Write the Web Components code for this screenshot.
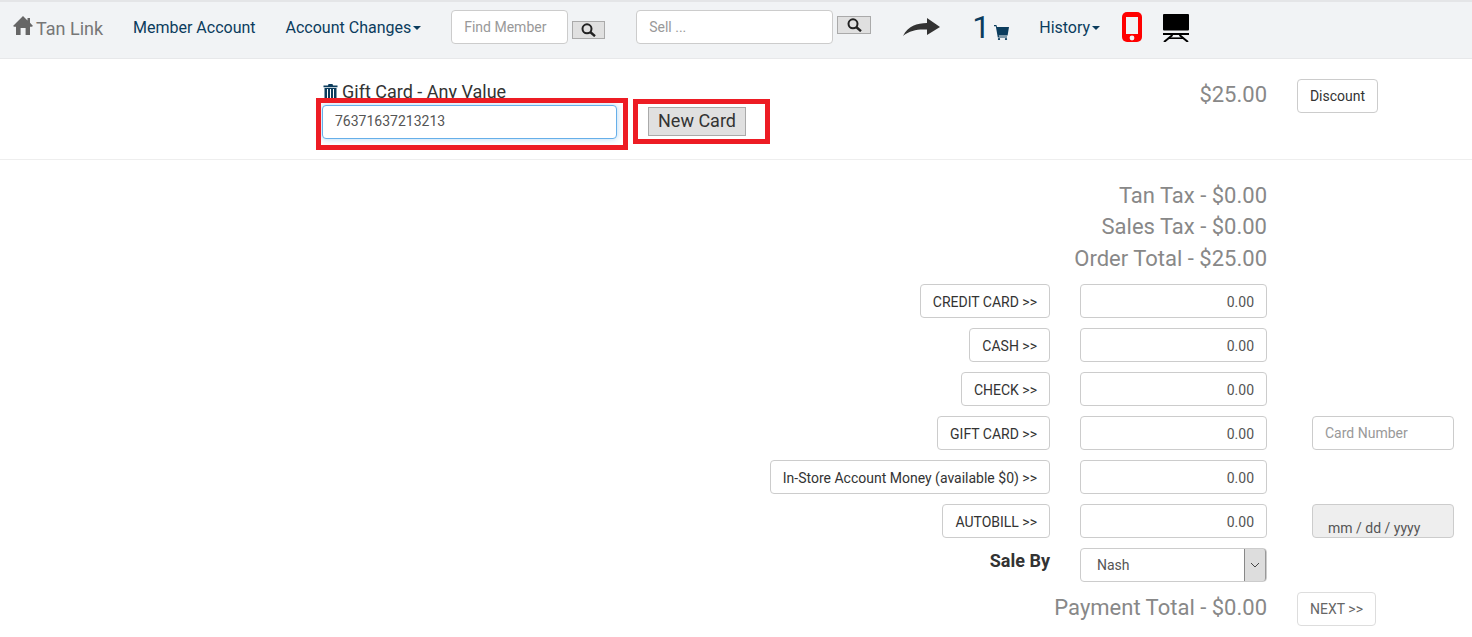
<!DOCTYPE html>
<html>
<head>
<meta charset="utf-8">
<title>Tan Link</title>
<style>
  html, body { margin: 0; padding: 0; background: #fff; overflow: hidden; }
  body { font-family: Roboto, "Liberation Sans", sans-serif; }
</style>
</head>
<body>
<tan-app></tan-app>

<script>
// small icon set, all drawn by hand
const icons = {
  home: '<svg width="20" height="19" viewBox="0 0 20 19"><path fill="#666" d="M10 0 L14.5 4.4 V2 H17 V6.8 L20 10 L18.8 10.8 H17 V19 H12.6 V12 H7.6 V19 H3 V10.8 H1.2 L0 10 Z"/></svg>',
  search: '<svg width="15" height="14" viewBox="0 0 15 14"><circle cx="6" cy="5.8" r="4.5" fill="none" stroke="#222" stroke-width="2"/><path d="M9.2 9 L14 13.2" stroke="#222" stroke-width="2.4"/></svg>',
  arrow: '<svg width="37" height="18" viewBox="0 0 37 18"><path fill="#333" d="M37 9 L24 0 V5 C14 5 5 8 0 18 C7 12 15 11 24 11.5 V17 Z"/></svg>',
  cart: '<svg width="15" height="15" viewBox="0 0 15 15"><path fill="#0b3c5d" d="M0 0 H2.4 L3 2 H15 L13.6 10.4 H4.8 L5 11.6 H13 V12.6 H3.8 L1.8 1.2 H0 Z"/><circle cx="5" cy="14" r="1.1" fill="#0b3c5d"/><circle cx="12" cy="14" r="1.1" fill="#0b3c5d"/></svg>',
  phone: '<svg width="20" height="30" viewBox="0 0 20 30"><rect width="20" height="30" rx="5" fill="#f00"/><rect x="4" y="5" width="12" height="17" fill="#f1f3f5"/><circle cx="10" cy="26" r="2.4" fill="#f1f3f5"/></svg>',
  kiosk: '<svg width="26" height="28" viewBox="0 0 26 28"><rect x="0" y="0" width="26" height="16.5" rx="1" fill="#000"/><rect x="0" y="19" width="26" height="2" fill="#000"/><path d="M9.5 21 L1 28 M16.5 21 L25 28" stroke="#000" stroke-width="2"/><rect x="6" y="23.4" width="14" height="1.6" fill="#000"/></svg>',
  trash: '<svg width="15" height="15" viewBox="0 0 15 15"><path fill="#0b3c5d" d="M5.5 0 H9.5 L10 1.5 H14.5 V3.2 H.5 V1.5 H5 Z M1.5 4 H13.5 V15 H1.5 Z"/><path stroke="#fff" stroke-width="1" d="M4.5 5 V14 M7.5 5 V14 M10.5 5 V14"/></svg>'
};

class TanNav extends HTMLElement {
  constructor() {
    super();
    this.attachShadow({ mode: 'open' });
    this.shadowRoot.innerHTML = `
      <style>
        :host {
          display: flex;
          align-items: center;
          box-sizing: border-box;
          height: 59px;
          padding: 0 0 6px 13px;
          background: #f1f3f5;
          border-top: 2px solid #e4e5e7;
          border-bottom: 1px solid #e7e8ea;
          font-family: Roboto, sans-serif;
          color: #0b3c5d;
        }
        .brand { display: flex; align-items: center; gap: 3px; width: 120px; font-size: 18px; color: #777; }
        .brand span + span { padding-top: 2px; }
        .brand svg { margin-top: -3px; }
        .link { font-size: 16px; white-space: nowrap; }
        .caret {
          display: inline-block; margin-left: 2px; vertical-align: 3px;
          border-top: 4px solid currentColor;
          border-left: 4px solid transparent;
          border-right: 4px solid transparent;
        }
        input {
          box-sizing: border-box; height: 34px; padding: 0 12px;
          background: #fff; border: 1px solid #ccc; border-radius: 4px;
          font: 14px Roboto, sans-serif; color: #555;
        }
        input::placeholder { color: #999; opacity: 1; }
        .find { width: 117px; margin-left: 30px; }
        .sell { width: 197px; margin-left: 31px; }
        .go {
          display: flex; align-items: center; justify-content: center;
          box-sizing: border-box; height: 18px; margin-left: 4px; padding: 0;
          background: #e0e0e0; border: 1px solid #aaa;
        }
        .find + .go { width: 33px; margin-top: 6px; }
        .sell + .go { width: 34px; margin-top: -4px; }
        .count { font-size: 32px; line-height: 36px; margin-left: 32px; width: 22px; }
      </style>
      <div class="brand"><span style="display:flex">${icons.home}</span><span>Tan Link</span></div>
      <span class="link">Member Account</span>
      <span class="link" style="margin-left:30px">Account Changes<span class="caret"></span></span>
      <input class="find" placeholder="Find Member">
      <button class="go">${icons.search}</button>
      <input class="sell" placeholder="Sell ...">
      <button class="go">${icons.search}</button>
      <span style="display:flex;margin-left:32px">${icons.arrow}</span>
      <span class="count">1</span>
      <span style="display:flex;margin-top:11px">${icons.cart}</span>
      <span class="link" style="margin-left:30px">History<span class="caret"></span></span>
      <span style="display:flex;margin-left:22px">${icons.phone}</span>
      <span style="display:flex;margin:2px 0 0 21px">${icons.kiosk}</span>
    `;
  }
}

class GiftLine extends HTMLElement {
  constructor() {
    super();
    this.attachShadow({ mode: 'open' });
    this.shadowRoot.innerHTML = `
      <style>
        :host {
          display: grid;
          grid-template-columns: 1fr auto 81px;
          box-sizing: border-box;
          height: 101px;
          padding: 20px 94px 0 322px;
          border-bottom: 1px solid #eee;
          font-family: Roboto, sans-serif;
          column-gap: 30px;
        }
        .title { display: flex; align-items: center; gap: 4px; height: 24px; padding-left: 1px; font-size: 18px; color: #333; }
        .entry { position: relative; display: flex; align-items: center; margin-top: 2px; }
        input {
          box-sizing: border-box; width: 295px; height: 34px; padding: 0 12px 2px;
          border: 1px solid #66afe9; border-radius: 4px;
          box-shadow: 0 0 6px rgba(102,175,233,.5);
          font: 14px Roboto, sans-serif; color: #555;
        }
        .entry button {
          box-sizing: border-box; width: 98px; height: 29px; margin: -2px 0 0 31px; padding: 0 0 2px;
          background: #e0e0e0; border: 1px solid #aaa;
          font: 18px Roboto, sans-serif; color: #333;
        }
        /* red annotation boxes drawn over the screenshot */
        .mark { position: absolute; border: 5px solid #ed1c24; box-sizing: border-box; pointer-events: none; }
        .m1 { left: -6px; top: -7px; width: 312px; height: 52px; }
        .m2 { left: 311px; top: -6px; width: 137px; height: 45px; }
        .price { font-size: 22px; color: #888; line-height: 30px; margin-top: -1px; padding-top: 2px; }
        .discount {
          box-sizing: border-box; width: 81px; height: 34px; margin: 0; padding: 0;
          background: #fff; border: 1px solid #ccc; border-radius: 4px;
          font: 14px Roboto, sans-serif; color: #333;
        }
      </style>
      <div>
        <div class="title">${icons.trash}<span>Gift Card - Any Value</span></div>
        <div class="entry">
          <input value="76371637213213">
          <button>New Card</button>
          <div class="mark m1"></div>
          <div class="mark m2"></div>
        </div>
      </div>
      <div class="price">$25.00</div>
      <button class="discount">Discount</button>
    `;
  }
}

class PayRow extends HTMLElement {
  constructor() {
    super();
    this.attachShadow({ mode: 'open' });
    this.shadowRoot.innerHTML = `
      <style>
        :host {
          display: grid;
          grid-template-columns: 1050px 187px 142px;
          column-gap: 30px;
          align-items: center;
          height: 44px;
          font-family: Roboto, sans-serif;
        }
        .label { display: flex; justify-content: flex-end; }
        button {
          box-sizing: border-box; height: 34px; padding: 1px 12px 0; background: #fff;
          border: 1px solid #ccc; border-radius: 4px;
          font: 14px Roboto, sans-serif; color: #333; white-space: nowrap;
        }
        input {
          box-sizing: border-box; width: 187px; height: 34px; padding: 1px 12px 0; text-align: right;
          background: #fff; border: 1px solid #ccc; border-radius: 4px;
          font: 14px Roboto, sans-serif; color: #555;
        }
        .side { margin-left: 15px; width: 142px; padding: 0 12px; text-align: left; }
        .side::placeholder { color: #999; opacity: 1; }
        .date { height: 34px; padding: 15px 0 0 15px; box-sizing: border-box; margin-left: 15px; width: 142px;
          background: #eee; border: 1px solid #ccc; border-radius: 4px; font-size: 14px; line-height: 16px; color: #555; }
      </style>
      <div class="label"><button></button></div>
      <input value="0.00">
      <div class="extra"></div>
    `;
  }
  connectedCallback() {
    this.shadowRoot.querySelector('button').textContent = this.getAttribute('label');
    const extra = this.shadowRoot.querySelector('.extra');
    if (this.hasAttribute('card')) extra.innerHTML = '<input class="side" placeholder="Card Number">';
    if (this.hasAttribute('date')) extra.innerHTML = '<div class="date">mm / dd / yyyy</div>';
  }
}

class TotalLine extends HTMLElement {
  constructor() {
    super();
    this.attachShadow({ mode: 'open' });
    this.shadowRoot.innerHTML = `
      <style>
        :host { display: block; font: 22px/31.5px Roboto, sans-serif; color: #888; text-align: right; }
      </style>
      <slot></slot>
    `;
  }
}

class PaymentPanel extends HTMLElement {
  constructor() {
    super();
    this.attachShadow({ mode: 'open' });
    this.shadowRoot.innerHTML = `
      <style>
        :host {
          display: block;
          padding: 19.7px 18px 0 0;
          font-family: Roboto, sans-serif;
        }
        .totals { width: 1267px; margin-bottom: 5.3px; }
        .sale {
          display: grid; grid-template-columns: 1050px 187px 142px; column-gap: 30px;
          align-items: center; height: 44px;
        }
        .sale b { justify-self: end; font-size: 18px; font-weight: 700; color: #333; margin: -10px 0 0; }
        .select {
          box-sizing: border-box; display: flex; justify-content: space-between; align-items: stretch;
          height: 34px; padding-left: 16px; background: #fff;
          border: 1px solid #ccc; border-radius: 4px; font-size: 14px; color: #555; line-height: 32px;
        }
        .arrow {
          display: flex; align-items: center; justify-content: center; width: 20px;
          background: #ddd; border-left: 1px solid #888; border-right: 1px solid #999; border-radius: 0 3px 3px 0;
        }
        .foot { display: grid; grid-template-columns: 1267px auto; column-gap: 30px; align-items: center; height: 44px; }
        .foot span { font-size: 22px; color: #888; text-align: right; margin-top: -4px; }
        .next {
          box-sizing: border-box; width: 79px; height: 34px; padding: 0; background: #fff;
          border: 1px solid #ddd; border-radius: 4px;
          font: 14px Roboto, sans-serif; color: #666;
        }
      </style>
      <div class="totals">
        <total-line>Tan Tax - $0.00</total-line>
        <total-line>Sales Tax - $0.00</total-line>
        <total-line>Order Total - $25.00</total-line>
      </div>
      <pay-row label="CREDIT CARD >>"></pay-row>
      <pay-row label="CASH >>"></pay-row>
      <pay-row label="CHECK >>"></pay-row>
      <pay-row label="GIFT CARD >>" card></pay-row>
      <pay-row label="In-Store Account Money (available $0) >>"></pay-row>
      <pay-row label="AUTOBILL >>" date></pay-row>
      <div class="sale">
        <b>Sale By</b>
        <div class="select">Nash<span class="arrow"><svg width="10" height="6" viewBox="0 0 10 6"><path d="M1 1 L5 5 L9 1" fill="none" stroke="#444" stroke-width="1"/></svg></span></div>
        <div></div>
      </div>
      <div class="foot"><span>Payment Total - $0.00</span><button class="next">NEXT &gt;&gt;</button></div>
    `;
  }
}

class TanApp extends HTMLElement {
  constructor() {
    super();
    this.attachShadow({ mode: 'open' });
    this.shadowRoot.innerHTML = `
      <style>:host { display: block; width: 1472px; height: 637px; overflow: hidden; }</style>
      <tan-nav></tan-nav>
      <gift-line></gift-line>
      <payment-panel></payment-panel>
    `;
  }
}

customElements.define('tan-nav', TanNav);
customElements.define('gift-line', GiftLine);
customElements.define('pay-row', PayRow);
customElements.define('total-line', TotalLine);
customElements.define('payment-panel', PaymentPanel);
customElements.define('tan-app', TanApp);
</script>
</body>
</html>
